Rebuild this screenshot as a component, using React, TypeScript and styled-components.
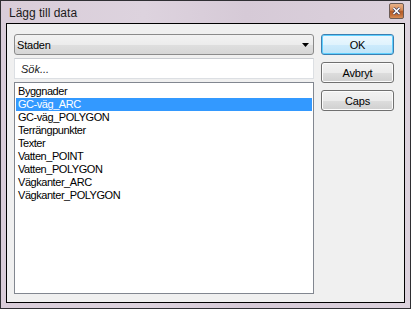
import React from "react";
import styled, { createGlobalStyle } from "styled-components";

const Global = createGlobalStyle`
  html, body { margin: 0; padding: 0; background: #ffffff; }
  body { font-family: "Liberation Sans", Arial, sans-serif; }
`;

const Window = styled.div`
  box-sizing: border-box;
  width: 411px;
  height: 309px;
  border: 1px solid #2f2f33;
  background: linear-gradient(90deg, #d9cdd9 0%, #ddd3de 35%, #d6cad7 60%, #dcd2dd 100%);
  display: flex;
  flex-direction: column;
  padding: 0 5px 5px 5px;
`;

const TitleBar = styled.div`
  height: 22px;
  display: flex;
  align-items: center;
  justify-content: space-between;
  padding-left: 3px;
  padding-right: 1px;
`;

const Title = styled.span`
  font-family: "Liberation Sans", Arial, sans-serif;
  font-size: 12px;
  color: #1b1b1b;
  margin-top: 1px;
`;

const CloseBtn = styled.div`
  width: 15px;
  height: 16px;
  margin-top: -3px;
  display: flex;
`;

const Client = styled.div`
  flex: 1;
  box-sizing: border-box;
  border: 1px solid #000000;
  background: #f0f0f0;
  display: flex;
  gap: 7px;
  padding: 10px 10px 8px 7px;
`;

const LeftCol = styled.div`
  width: 300px;
  display: flex;
  flex-direction: column;
  gap: 3px;
`;

const Combo = styled.div`
  box-sizing: border-box;
  height: 21px;
  border: 1px solid #8b8b8b;
  border-radius: 3px;
  background: linear-gradient(#f3f3f3 0%, #ececec 50%, #dfdfdf 51%, #d6d6d6 100%);
  display: flex;
  align-items: center;
  justify-content: space-between;
  padding: 0 4px 0 2px;
  font-size: 11px;
  letter-spacing: -0.2px;
  color: #000;
`;

const SearchBox = styled.div`
  box-sizing: border-box;
  height: 21px;
  border: 1px solid #dcdfe3;
  border-top-color: #c9ccd1;
  background: #ffffff;
  display: flex;
  align-items: center;
  padding-left: 6px;
  font-size: 11px;
  font-style: italic;
  color: #222;
`;

const List = styled.div`
  box-sizing: border-box;
  flex: 1;
  border: 1px solid #828790;
  background: #ffffff;
  padding: 2px 1px;
  display: flex;
  flex-direction: column;
`;

const Item = styled.div<{ $sel?: boolean }>`
  height: 13px;
  line-height: 13px;
  font-size: 11px;
  letter-spacing: -0.45px;
  padding-left: 2px;
  white-space: nowrap;
  color: ${(p) => (p.$sel ? "#ffffff" : "#000000")};
  background: ${(p) => (p.$sel ? "#3399ff" : "transparent")};
`;

const RightCol = styled.div`
  width: 73px;
  display: flex;
  flex-direction: column;
  gap: 7px;
`;

const Button = styled.div<{ $default?: boolean }>`
  box-sizing: border-box;
  height: 21px;
  border-radius: 3px;
  border: 1px solid ${(p) => (p.$default ? "#3c7fb1" : "#707070")};
  background: ${(p) =>
    p.$default
      ? "linear-gradient(#eef8fe 0%, #e0f3fd 50%, #cdebfc 51%, #bfe4f8 100%)"
      : "linear-gradient(#f2f2f2 0%, #ebebeb 50%, #dddddd 51%, #cfcfcf 100%)"};
  box-shadow: inset 0 0 0 1px ${(p) => (p.$default ? "#5fd0ff" : "#fcfcfc")};
  display: flex;
  align-items: center;
  justify-content: center;
  font-size: 11px;
  letter-spacing: -0.2px;
  color: #000;
`;

const items = [
  "Byggnader",
  "GC-väg_ARC",
  "GC-väg_POLYGON",
  "Terrängpunkter",
  "Texter",
  "Vatten_POINT",
  "Vatten_POLYGON",
  "Vägkanter_ARC",
  "Vägkanter_POLYGON",
];

export default function App() {
  return (
    <>
      <Global />
      <Window>
        <TitleBar>
          <Title>Lägg till data</Title>
          <CloseBtn>
            <svg width="15" height="16" viewBox="0 0 15 16">
              <defs>
                <linearGradient id="cg" x1="0" y1="0" x2="0" y2="1">
                  <stop offset="0" stopColor="#e9b48c" />
                  <stop offset="0.45" stopColor="#d68a55" />
                  <stop offset="0.5" stopColor="#b35a26" />
                  <stop offset="0.75" stopColor="#c06a34" />
                  <stop offset="1" stopColor="#d9935e" />
                </linearGradient>
              </defs>
              <rect x="0.5" y="0.5" width="14" height="15" rx="1.5" fill="url(#cg)" stroke="#6b5b56" />
              <path d="M4.5 5 L10.5 11 M10.5 5 L4.5 11" stroke="#3a3a5a" strokeWidth="3" />
              <path d="M4.5 5 L10.5 11 M10.5 5 L4.5 11" stroke="#ffffff" strokeWidth="1.6" />
            </svg>
          </CloseBtn>
        </TitleBar>
        <Client>
          <LeftCol>
            <Combo>
              <span>Staden</span>
              <svg width="7" height="4" viewBox="0 0 7 4">
                <path d="M0 0 H7 L3.5 4 Z" fill="#000" />
              </svg>
            </Combo>
            <SearchBox>Sök...</SearchBox>
            <List>
              {items.map((t, i) => (
                <Item key={t} $sel={i === 1}>
                  {t}
                </Item>
              ))}
            </List>
          </LeftCol>
          <RightCol>
            <Button $default>OK</Button>
            <Button>Avbryt</Button>
            <Button>Caps</Button>
          </RightCol>
        </Client>
      </Window>
    </>
  );
}
